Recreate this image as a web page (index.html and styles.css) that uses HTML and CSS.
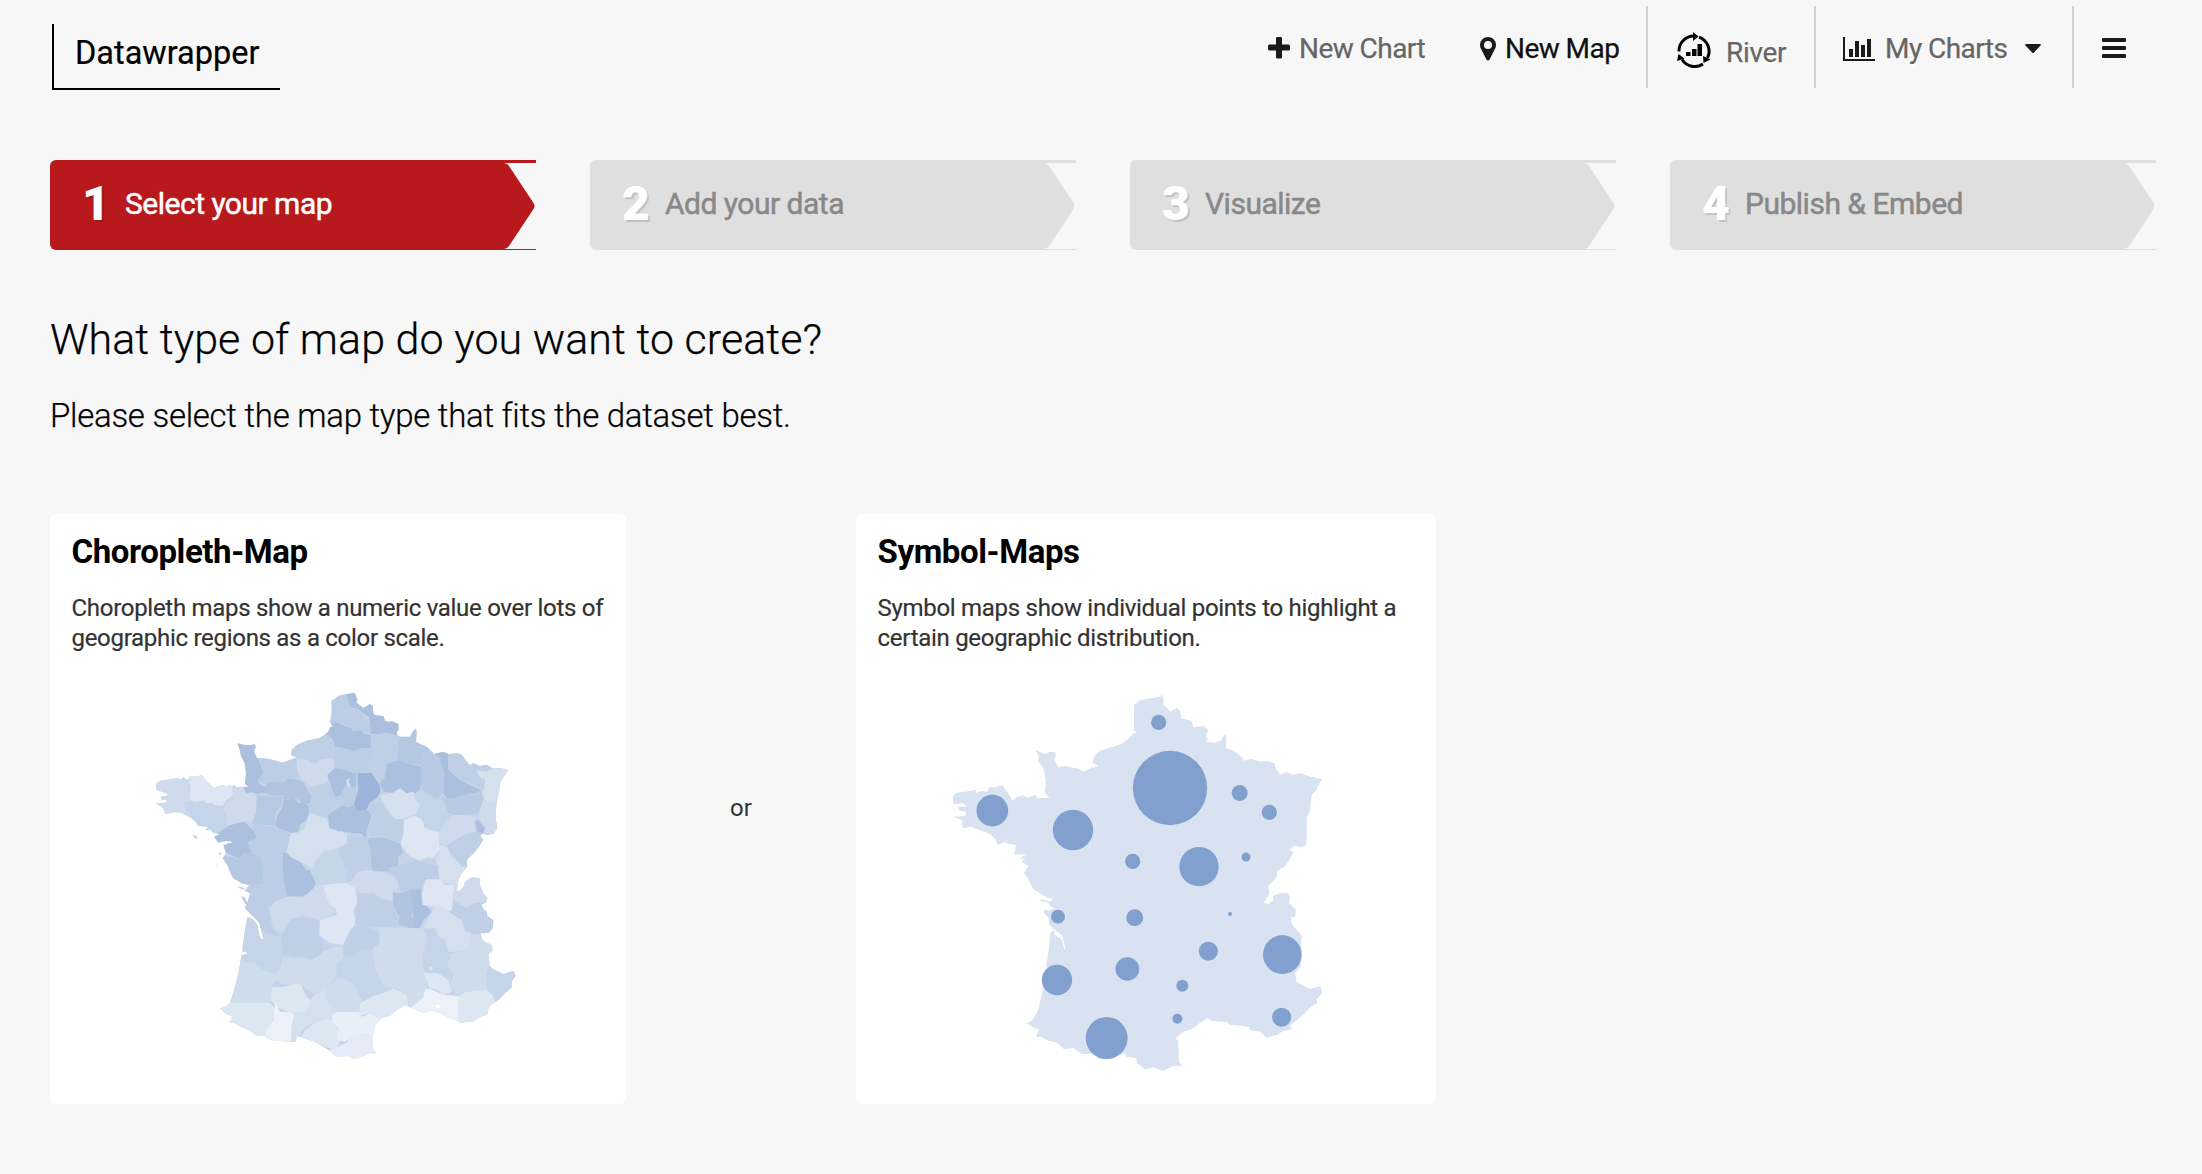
FILE: index.html
```html
<!DOCTYPE html>
<html lang="en">
<head>
<meta charset="utf-8">
<title>Datawrapper</title>
<link rel="stylesheet" href="styles.css">
</head>
<body>
<header class="header">
  <a class="logo"><span>Datawrapper</span></a>
  <nav class="nav">
    <a class="nav-item chart">
      <svg width="22" height="22" viewBox="0 0 22 22"><path fill="#1a1a1a" d="M9.300 0h3.400q1.300 0 1.300 1.300V7.500h6.500q1.500 0 1.500 1.500v3q0 1.500-1.500 1.500H14v6.700q0 1.300-1.300 1.300H9.300Q8 21.500 8 20.200V13.500H1.500Q0 13.500 0 12V9Q0 7.500 1.500 7.500H8V1.300Q8 0 9.300 0z"/></svg>
      <span class="t-chart">New Chart</span>
    </a>
    <a class="nav-item map active">
      <svg width="16" height="24" viewBox="0 0 16 24"><path fill="#1a1a1a" fill-rule="evenodd" d="M8 0a8 8 0 0 1 8 8q0 1.800-.7 3.300L9.600 22.500q-1.600 2.200-3.200 0L.7 11.300Q0 9.800 0 8a8 8 0 0 1 8-8zm0 4a4 4 0 1 0 0 8 4 4 0 0 0 0-8z"/></svg>
      <span class="t-map">New Map</span>
    </a>
    <a class="nav-item river">
      <svg width="34" height="36" viewBox="0 0 34 36"><g fill="none" stroke="#000" stroke-width="3"><path d="M2 19.500A15 15 0 0 1 17 4"/><path d="M22 5.200A15 15 0 0 1 30.500 26"/><path d="M26 32A15 15 0 0 1 5 27.500"/></g><path d="M16 0l5.500 4.500L16 9zM33.500 27.500l-7 3.500-.5-7zM0 29l1.500-7 6 4.500zM9 20h4.500v4H9zM15 17h4.500v7H15zM20.500 12H25v12h-4.500z"/></svg>
      <span class="t-river">River</span>
    </a>
    <a class="nav-item mine">
      <svg width="32" height="24" viewBox="0 0 32 24"><path fill="#1a1a1a" d="M0 0h2v22h30v2H0zM6 12h4v8H6zM12 4h4v16h-4zM18 8h4v12h-4zM24 2h4v18h-4z"/></svg>
      <span class="t-mine">My Charts</span>
      <svg class="caret" width="16" height="9" viewBox="0 0 16 9"><path fill="#1a1a1a" d="M1 0h14q1.500.3.500 1.500L9 8.400q-1 1-2 0L.5 1.500Q-.5.300 1 0z"/></svg>
    </a>
    <a class="nav-item menu">
      <svg width="24" height="20" viewBox="0 0 24 20"><g fill="#1a1a1a"><rect width="24" height="4" rx="1"/><rect y="8" width="24" height="4" rx="1"/><rect y="16" width="24" height="4" rx="1"/></g></svg>
    </a>
  </nav>
</header>

<ol class="steps">
  <li class="step current"><svg class="tip" width="36" height="86" viewBox="0 0 36 86"><path d="M3 0h33v86H3q4 0 6-3L33.500 46q2-3 0-6L9 3Q7 0 3 0z"/></svg><b>1</b><span>Select your map</span></li>
  <li class="step"><svg class="tip" width="36" height="86" viewBox="0 0 36 86"><path d="M3 0h33v86H3q4 0 6-3L33.500 46q2-3 0-6L9 3Q7 0 3 0z"/></svg><b>2</b><span>Add your data</span></li>
  <li class="step"><svg class="tip" width="36" height="86" viewBox="0 0 36 86"><path d="M3 0h33v86H3q4 0 6-3L33.500 46q2-3 0-6L9 3Q7 0 3 0z"/></svg><b>3</b><span>Visualize</span></li>
  <li class="step"><svg class="tip" width="36" height="86" viewBox="0 0 36 86"><path d="M3 0h33v86H3q4 0 6-3L33.500 46q2-3 0-6L9 3Q7 0 3 0z"/></svg><b>4</b><span>Publish &amp; Embed</span></li>
</ol>

<main>
  <h1>What type of map do you want to create?</h1>
  <p class="lead">Please select the map type that fits the dataset best.</p>
  <div class="choices">
    <section class="card choropleth">
      <h2>Choropleth-Map</h2>
      <p>Choropleth maps show a numeric value over lots of<br>geographic regions as a color scale.</p>
      <svg class="france" width="400" height="400" viewBox="0 0 1200 1200">
        <defs><clipPath id="land"><path d="M48 312L60 302 90 298 115 294 120 300 130 292 143 300 150 288 165 290 185 286 195 298 205 308 222 324 235 318 250 316 258 320 270 316 277 320 282 314 290 322 300 320 325 321 315 312 318 280 314 250 303 228 298 205 292 190 310 194 330 196 345 193 347 202 342 212 345 222 352 235 372 235 400 240 428 248 450 240 458 236 472 234 453 225 455 210 470 195 500 182 540 174 565 155 570 142 578 140 570 125 575 100 575 62 600 46 645 38 648 48 652 60 650 68 665 80 670 84 690 72 698 78 700 100 705 106 730 108 735 122 745 126 755 124 775 132 776 150 770 155 772 165 780 170 810 170 818 155 828 145 830 160 828 185 840 192 860 200 870 210 882 222 910 215 925 222 950 220 965 224 980 245 990 255 1000 250 1020 258 1040 254 1058 265 1080 264 1105 270 1095 285 1080 308 1078 330 1072 360 1068 385 1068 420 1072 445 1060 462 1040 465 1030 460 1020 468 1030 478 1020 495 1005 515 990 530 980 540 982 560 965 580 955 600 950 632 960 632 972 618 975 605 995 592 1018 595 1020 615 1030 640 1042 655 1038 668 1025 672 1028 685 1040 695 1042 708 1060 720 1058 745 1048 758 1020 760 1030 782 1055 795 1058 810 1045 825 1050 860 1065 870 1090 882 1120 873 1127 888 1115 905 1115 922 1095 940 1075 960 1060 970 1045 985 1042 1005 1020 1010 1000 1025 980 1025 965 1030 945 1020 920 1012 900 998 875 992 850 998 830 990 795 975 770 990 750 1008 725 1013 705 1035 698 1070 698 1105 708 1120 685 1120 670 1128 643 1136 620 1128 595 1132 575 1118 565 1110 540 1095 525 1085 500 1078 470 1068 468 1086 430 1084 405 1082 380 1075 375 1067 350 1068 330 1052 305 1042 280 1028 268 1028 277 1010 255 1000 240 985 260 978 270 968 285 920 295 880 305 825 322 822 318 815 308 815 308 800 315 750 323 710 340 720 352 735 360 775 370 778 366 760 358 730 345 715 330 700 315 685 325 660 330 640 315 632 328 615 305 610 280 595 270 575 262 555 248 535 258 520 250 495 260 488 250 484 235 488 222 470 240 462 220 458 212 450 195 450 205 440 175 438 168 426 150 412 125 400 105 396 75 402 70 385 48 370 75 368 82 360 65 360 62 350 85 346 80 340 50 330z"/></clipPath></defs>
        <g clip-path="url(#land)">
          <path fill="#c5d4e9" d="M0 0h1200v1200H0z"/>
          <g class="d">
            <path class="e" d="M40 280L148 280 145 330 148 362 132 370 135 385 150 395 155 412 40 412z"/>
            <path class="g" d="M148 280L200 280 222 318 280 316 280 345 258 362 245 384 235 376 222 376 215 368 200 370 190 362 165 365 148 360 150 330z"/>
            <path class="d4" d="M132 368L165 366 190 363 200 370 215 369 222 384 235 377 245 378 258 390 255 405 262 425 258 440 225 465 190 460 155 412 135 390z"/>
            <path class="e" d="M275 312L315 322 318 340 350 340 352 400 345 430 320 425 290 430 260 438 262 410 250 390 258 368 280 355z"/>
            <path class="a" d="M285 185L355 185 355 235 362 255 372 275 355 300 358 312 380 322 375 338 350 342 335 336 318 342 308 315z"/>
            <path class="c" d="M355 230L400 230 470 228 470 260 476 290 455 298 440 296 430 308 400 304 375 312 355 304 370 278 362 252z"/>
            <path class="a2" d="M375 312L400 304 430 308 440 296 460 296 475 300 490 305 500 325 515 350 508 372 490 368 460 352 450 360 430 360 428 345 400 348 375 338 380 322z"/>
            <path class="c2" d="M440 150L565 160 580 195 582 238 555 240 525 250 500 240 475 232 440 230z"/>
            <path class="e" d="M472 234L500 240 515 250 530 250 540 240 555 236 568 238 575 235 582 245 582 262 565 290 560 308 520 322 505 315 490 302 480 290 470 262z"/>
            <path class="c2" d="M508 325L560 308 575 320 600 345 606 390 570 412 545 410 510 395 508 375 515 350z"/>
            <path class="b" d="M350 345L400 350 428 348 425 362 425 375 405 405 405 435 370 435 335 428 348 400z"/>
            <path class="a" d="M430 360L450 360 460 352 475 368 490 365 508 380 505 415 480 435 475 455 455 460 415 450 405 432 412 405 428 380z"/>
            <path class="a" d="M215 470L270 435 315 425 328 440 340 450 352 475 325 485 335 520 310 522 300 538 262 520 235 500z"/>
            <path class="c" d="M335 432L400 438 452 458 448 490 435 518 400 522 360 530 330 510 325 485 350 475z"/>
            <path class="f" d="M452 460L475 458 500 440 530 470 550 510 530 540 515 568 495 550 480 545 455 535 440 515z"/>
            <path class="b2" d="M240 525L300 538 312 522 335 518 362 530 372 570 372 612 310 620 255 605z"/>
            <path class="c" d="M365 528L425 520 430 560 430 600 432 650 372 625z"/>
            <path class="d5" d="M510 575L530 540 550 512 600 508 620 540 625 610 560 625 520 605z"/>
            <path class="a" d="M428 518L440 518 450 530 480 545 500 570 515 590 527 610 515 640 480 650 440 648 428 600z"/>
          </g>
          <g class="d" transform="translate(540 0)">
            <path class="c" d="M20 30L75 33 85 70 120 95 130 115 150 130 150 158 100 155 95 140 60 132 20 125z"/>
            <path class="a" d="M75 35L115 25 170 80 245 115 245 168 152 162 150 130 148 110 128 100 120 92 108 85 90 82z"/>
            <path class="a" d="M0 150L20 128 45 126 60 132 95 145 100 155 120 150 130 160 152 165 155 205 130 205 100 212 45 200 40 180 20 162z"/>
            <path class="c" d="M42 202L100 212 130 206 155 205 155 240 145 275 130 280 100 282 75 270 45 265z"/>
            <path class="c2" d="M155 165L200 158 240 168 235 240 200 250 195 290 180 308 160 280 145 275 145 250 155 240 152 205z"/>
            <path class="b2" d="M240 168L295 130 305 178 345 215 310 225 305 255 265 250 230 238z"/>
            <path class="a" d="M200 252L235 240 265 250 305 260 305 310 295 340 260 340 240 325 220 338 190 335 180 310 195 290z"/>
            <path class="z" d="M112 280L155 278 165 295 180 315 182 335 170 355 150 368 140 390 108 395 100 372 115 330z"/>
            <path class="a" d="M22 285L45 265 75 270 108 282 110 320 95 322 82 316 75 322 68 345 45 350 35 325z"/>
            <path class="f" d="M80 300L90 294 86 306 94 322 80 316z"/>
            <path class="c" d="M62 345L75 322 108 320 108 350 102 375 65 380z"/>
            <path class="a" d="M65 378L85 380 102 375 110 395 145 390 155 405 148 430 140 450 140 475 120 460 100 460 60 452 30 440 25 408z"/>
            <path class="c2" d="M150 370L180 365 195 385 210 395 225 415 255 420 250 455 240 485 205 475 190 465 155 468 140 450 155 410 145 390z"/>
            <path class="f" d="M180 345L195 343 220 338 240 325 260 340 280 335 285 355 300 375 290 400 255 415 225 418 205 395 195 378z"/>
            <path class="d4" d="M290 335L310 325 340 350 370 360 385 405 375 435 355 455 340 450 320 445 310 420 290 405 300 375 285 350z"/>
            <path class="b3" d="M310 225L335 210 360 230 370 270 370 340 350 355 305 330 305 260z"/>
            <path class="a" d="M335 210L385 205 385 235 385 270 420 300 450 315 485 330 470 340 430 345 400 355 380 355 370 340 372 275 360 235z"/>
            <path class="c2" d="M385 210L425 210 455 240 525 245 520 275 475 270 478 288 495 300 490 325 440 305 400 285 385 260z"/>
            <path class="f" d="M470 270L500 275 515 268 580 255 550 310 540 375 500 365 485 340 495 320 495 298 478 290z"/>
            <path class="b3" d="M360 350L380 355 400 355 430 345 470 345 485 330 490 360 475 400 440 405 400 405 385 400 375 370z"/>
            <path class="e" d="M490 360L540 370 545 480 490 465 495 440 475 410z"/>
            <path class="e" d="M375 430L400 405 440 405 465 412 468 455 430 465 390 495 360 490 355 455z"/>
            <path class="c2" d="M382 495L430 465 470 455 500 460 500 500 445 555 425 580 415 545 390 520z"/>
            <path class="a" d="M465 425L475 420 495 445 490 460 470 455z"/>
            <path class="f" d="M360 495L380 498 395 530 422 555 430 600 360 610 355 560 345 535 358 520z"/>
            <path class="g" d="M252 420L285 408 300 415 310 425 312 442 325 448 355 455 360 510 340 535 325 532 295 542 265 525 242 492 250 465z"/>
            <path class="a2" d="M142 475L190 472 205 478 225 485 240 490 250 520 235 530 235 560 205 575 155 572 150 510z"/>
            <path class="c2" d="M80 470L140 470 150 510 155 572 130 570 110 600 70 605 72 550 55 510 85 485z"/>
            <path class="f" d="M-30 398L5 412 20 418 28 440 60 452 82 462 80 490 40 510 10 513 -30 525 -10 500z"/>
            <path class="f" d="M-35 405L0 415 10 520 -20 510 -50 460z"/>
            <path class="a" d="M25 405L60 380 70 400 60 455 28 445z"/>
          </g>
          <g class="d" transform="translate(180 570)">
            <path class="c" d="M120 40L195 45 240 65 262 80 225 95 205 115 215 170 240 200 190 185 150 140 115 110z"/>
            <path class="c" d="M195 0L252 0 252 45 262 80 235 75 195 60z"/>
            <path class="a" d="M248 0L335 0 347 40 315 75 265 80 252 40z"/>
            <path class="d5" d="M330 0L440 0 440 38 400 45 370 42 345 35z"/>
            <path class="e2" d="M210 115L225 95 262 80 310 80 320 100 300 140 270 150 250 190 220 175z"/>
            <path class="e" d="M315 78L345 50 370 45 385 95 410 125 380 145 355 150 305 135z"/>
            <path class="g" d="M370 45L440 38 465 50 472 95 460 120 468 160 450 180 430 225 390 220 358 195 360 150 410 135 408 118 388 105 375 65z"/>
            <path class="c" d="M565 -5L650 -30 715 -10 715 25 675 30 665 55 600 65 595 35z"/>
            <path class="e" d="M475 5L510 0 530 5 560 8 595 35 595 55 575 95 540 85 520 70 480 70 470 55 445 45z"/>
            <path class="c2" d="M470 72L520 70 540 85 580 95 598 165 570 172 530 172 500 170 465 160 472 100z"/>
            <path class="a2" d="M578 65L600 70 630 60 640 100 635 140 665 165 650 185 625 172 595 165 598 140 580 110z"/>
            <path class="a" d="M630 60L665 55 668 95 695 125 670 150 655 185 640 178 640 140z"/>
            <path class="f" d="M715 -5L800 -10 785 30 775 50 760 48 720 30z"/>
            <path class="g" d="M678 28L720 28 735 45 765 45 755 120 740 125 705 110 668 105 665 70z"/>
            <path class="e" d="M758 70L800 0 870 10 875 90 830 98 800 115 785 110 762 90z"/>
            <path class="c2" d="M765 95L800 115 825 98 870 100 900 160 850 198 810 190 790 170 785 155 750 130z"/>
            <path class="f" d="M695 125L710 108 725 112 745 125 785 150 795 185 815 190 815 215 800 240 765 245 745 245 735 210 715 200 705 175 670 175z"/>
            <path class="d4" d="M680 180L705 180 715 200 735 210 750 260 740 285 755 315 720 318 670 310 672 240z"/>
            <path class="e2" d="M755 250L800 240 815 195 850 190 895 240 880 290 865 300 860 330 870 360 800 370 770 372 750 350 760 310 740 285z"/>
            <path class="d4" d="M865 285L960 290 945 360 895 400 880 398 878 380 858 350 868 335 858 318z"/>
            <path class="h" d="M770 380L800 365 860 360 880 378 890 410 865 440 800 475 765 465z"/>
            <path class="i" d="M625 412L650 400 670 380 670 360 685 355 735 375 775 378 775 460 720 435 620 430z"/>
            <path class="h" d="M668 308L715 310 745 330 755 365 735 375 710 360 690 355 680 335z"/>
            <path class="e2" d="M530 172L670 175 680 205 668 260 672 310 685 340 665 385 630 415 615 400 590 355 550 350 525 300 515 240 540 220z"/>
            <path class="c2" d="M470 165L500 170 535 185 538 215 515 240 485 235 460 255 430 265 432 215 450 190z"/>
            <path class="e2" d="M365 245L425 225 432 262 410 285 410 320 380 350 345 375 310 350 270 345 240 340 220 320 245 262 335 268z"/>
            <path class="d4" d="M485 235L500 240 515 245 525 300 550 345 540 370 510 382 480 375 465 345 430 325 410 315 410 280 435 262 460 255z"/>
            <path class="c2" d="M305 140L355 150 355 195 370 210 365 250 335 270 310 258 290 262 245 250 245 195 270 150z"/>
            <path class="d4" d="M120 120L155 140 190 185 245 200 248 265 240 295 225 312 190 300 165 280 110 275z"/>
            <path class="e2" d="M100 270L165 280 190 300 225 312 240 320 215 350 210 398 80 405z"/>
            <path class="h" d="M215 352L250 350 300 340 320 380 340 395 320 425 280 430 235 415 210 390z"/>
            <path class="h" d="M50 398L210 398 230 420 200 495 190 515 80 480z"/>
            <path class="i" d="M225 393L240 425 265 425 285 432 275 470 288 525 190 520 200 480 220 450z"/>
            <path class="f" d="M335 385L345 375 380 350 395 395 415 425 385 450 350 455 320 470 300 490 290 525 272 525 275 470 285 430 320 425z"/>
            <path class="h" d="M350 455L390 445 415 480 420 510 410 540 300 510 315 480z"/>
            <path class="e2" d="M380 350L405 330 430 325 465 345 485 390 475 425 400 420 375 385z"/>
            <path class="h" d="M480 400L520 378 560 365 580 355 620 375 625 415 540 460 500 432 475 438z"/>
            <path class="j" d="M395 435L410 425 475 425 485 440 510 432 540 445 520 500 490 492 450 505 435 515 410 510 415 475 395 455z"/>
            <path class="k" d="M385 540L410 530 440 518 450 500 490 492 530 500 540 560 460 580 385 560z"/>
            <path class="h" d="M688 292L698 290 698 300 690 303z"/>
          </g>
        </g>
        <g class="water"><path d="M885 978l12-5 5 8-10 6zM245 492l10-8 15 0 8 6-12-2-10 6z"/></g>
        <g fill="#bccde5"><path d="M158 463l10 5 5 8-10-2zM238 517l6 1 0 7-6-1zM226 555l7 1-2 2zM292 618l18 5 5 8-16-6zM304 648l10 4 8 16-2 8-10-12z"/></g>
      </svg>
    </section>
    <span class="or">or</span>
    <section class="card symbols">
      <h2>Symbol-Maps</h2>
      <p>Symbol maps show individual points to highlight a<br>certain geographic distribution.</p>
      <svg class="france" width="400" height="400" viewBox="0 0 1200 1200">
        <path fill="#d9e2f1" d="M38 350L50 338 75 335 108 330 110 340 122 333 142 335 148 320 165 322 188 316 195 328 205 340 217 362 232 350 250 346 262 353 288 344 292 354 328 354 315 338 318 300 310 265 295 245 295 225 286 210 315 222 330 216 346 216 347 228 342 238 355 262 372 258 415 266 430 275 455 264 475 257 457 248 462 230 480 212 545 192 565 177 582 158 592 161 582 150 582 75 602 60 660 50 666 44 672 60 669 76 680 82 690 95 712 84 722 96 723 115 755 122 760 142 792 138 804 152 797 170 805 175 797 185 825 188 842 182 855 162 859 175 858 205 880 212 905 230 912 242 935 236 955 244 985 244 1003 250 1008 268 1022 284 1040 275 1058 285 1082 279 1112 290 1147 297 1135 315 1130 330 1115 345 1110 390 1100 415 1100 470 1098 495 1085 502 1062 497 1048 510 1062 516 1035 560 1012 572 1010 592 985 618 988 640 972 668 985 672 1000 660 998 648 1020 640 1042 638 1050 650 1048 670 1068 690 1065 710 1052 712 1055 732 1070 750 1085 765 1082 860 1065 880 1070 905 1085 915 1110 927 1142 918 1146 940 1130 958 1132 970 1112 980 1095 1000 1065 1025 1050 1038 1058 1048 1030 1053 1010 1065 980 1073 960 1055 928 1050 930 1042 890 1036 870 1036 862 1026 815 1023 803 1014 780 1028 755 1048 730 1055 707 1075 715 1082 716 1145 726 1158 700 1158 670 1172 640 1162 615 1168 592 1150 588 1134 560 1130 555 1120 530 1128 505 1138 480 1138 455 1122 425 1122 400 1104 372 1108 352 1088 325 1082 302 1070 288 1072 297 1048 275 1040 260 1030 278 1020 295 990 308 930 318 880 328 862 318 862 326 810 331 760 340 750 345 765 365 778 374 812 375 800 366 765 345 750 328 735 325 712 313 700 312 688 325 692 345 685 333 680 325 668 300 662 305 657 330 665 338 656 320 652 280 628 265 598 252 580 264 558 245 545 255 538 240 535 260 522 222 524 228 495 195 490 205 482 188 488 172 495 168 480 150 462 125 452 90 440 68 445 66 420 38 410 76 408 78 395 55 390 55 380 80 380 70 370 40 372z"/>
        <g fill="#82a0ce">
          <circle cx="656" cy="127" r="23"/><circle cx="690" cy="324" r="111.500"/><circle cx="899" cy="339" r="24"/><circle cx="988" cy="397" r="23"/><circle cx="157" cy="392" r="47.500"/><circle cx="399" cy="450" r="60.500"/><circle cx="578" cy="544" r="23"/><circle cx="777" cy="560" r="59"/><circle cx="918" cy="531" r="13.500"/><circle cx="354" cy="710" r="21"/><circle cx="584" cy="713" r="25.500"/><circle cx="870" cy="702" r="6"/><circle cx="805" cy="814" r="28.500"/><circle cx="1027" cy="824" r="58"/><circle cx="562" cy="867" r="35.500"/><circle cx="351" cy="900" r="45.500"/><circle cx="727" cy="917" r="18"/><circle cx="712" cy="1016" r="15"/><circle cx="1025" cy="1012" r="28.500"/><circle cx="500" cy="1074" r="63"/>
        </g>
      </svg>
    </section>
  </div>
</main>
</body>
</html>
```
FILE: styles.css
```css
* { box-sizing: border-box; }
body { margin: 0; background: #f7f7f7; color: #000; font-family: Roboto, "Liberation Sans", sans-serif; font-size: 24px; }
svg { display: block; flex: none; }
h1, h2, p, ol { margin: 0; padding: 0; font-weight: 400; }

.header { height: 160px; display: flex; justify-content: space-between; align-items: flex-start; padding: 0 0 0 52px; }
.logo { margin-top: 24px; width: 228px; height: 66px; border: solid #000; border-width: 0 0 2px 2px; padding: 9px 0 0 21px; font-size: 32.5px; line-height: 40px; white-space: nowrap; -webkit-text-stroke: .2px; }
.nav { display: flex; margin-top: 6px; height: 82px; font-size: 28px; line-height: 40px; letter-spacing: -.55px; color: #666; text-shadow: 0 2px 0 #fff; -webkit-text-stroke: .25px; }
.nav-item { display: flex; align-items: flex-start; white-space: nowrap; }
.nav-item span { padding-top: 23px; }
.chart { width: 212px; gap: 9px; }
.chart svg { margin-top: 31px; }
.map { width: 166px; gap: 9px; color: #111; }
.map svg { margin-top: 31px; }
.river { width: 168px; gap: 15px; border-left: 2px solid #d0d0d0; padding-left: 29px; letter-spacing: -.3px; }
.river svg { margin-top: 26px; }
.nav .river span { padding-top: 27px; }
.mine { width: 258px; gap: 10px; border-left: 2px solid #d0d0d0; padding-left: 27px; }
.mine svg { margin-top: 31px; }
.mine .caret { margin: 38px 0 0 8px; }
.menu { width: 130px; border-left: 2px solid #d0d0d0; padding-left: 28px; }
.menu svg { margin-top: 32px; }

.steps { list-style: none; display: flex; gap: 54px; padding: 0 0 0 50px; }
.step { position: relative; width: 486px; height: 90px; background: #dfdfdf; border-radius: 6px 0 0 6px; display: flex; padding-left: 32px; color: #888; }
.step b { width: 43px; font-size: 48px; line-height: 88px; font-weight: 900; color: #fff; text-shadow: 2px 2px 0 rgba(0, 0, 0, .12); }
.step span { font-size: 30px; line-height: 87px; letter-spacing: -.5px; white-space: nowrap; -webkit-text-stroke: .5px; }
.current { background: #b7191d; color: #fff; }
.tip { position: absolute; right: 0; top: 3px; fill: #f7f7f7; }

main { padding: 64px 0 0 50px; }
h1 { font-size: 43px; line-height: 50px; font-weight: 300; letter-spacing: .05px; -webkit-text-stroke: .25px; }
.lead { margin-top: 32px; font-size: 33px; line-height: 40px; font-weight: 300; letter-spacing: -.27px; -webkit-text-stroke: .25px; }
.choices { display: flex; align-items: center; margin-top: 78px; }
.card { height: 590px; background: #fff; border-radius: 6px; padding: 18px 0 0 21.5px; color: #333; }
.choropleth { width: 576px; }
.symbols { width: 580px; }
.card h2 { font-size: 33px; line-height: 40px; font-weight: 700; letter-spacing: -.4px; color: #000; white-space: nowrap; }
.card p { margin-top: 21px; line-height: 30px; letter-spacing: -.29px; white-space: nowrap; -webkit-text-stroke: .2px; }
.choropleth .france { margin: 27px 0 0 68.5px; }
.symbols .france { margin: 27px 0 0 62.5px; }
.or { width: 230px; padding: 0 0 3px 104px; color: #333; }

.z { fill: #9db5db; } .a { fill: #abc0de; } .a2 { fill: #b0c4e0; } .b { fill: #b6c9e2; } .b2 { fill: #b4c8e1; } .b3 { fill: #b8cae4; }
.c { fill: #bccde5; } .c2 { fill: #bfcfe6; } .d4 { fill: #c4d4e9; } .d5 { fill: #c6d6e9; } .e { fill: #cfdbed; } .e2 { fill: #cfdcec; }
.f { fill: #d4e0ee; } .g { fill: #dde6f2; } .h { fill: #dce7f1; } .i { fill: #ebf0f9; } .j { fill: #e8eff8; } .k { fill: #e4ebf6; }
.d path { stroke: #d5e1f2; stroke-opacity: .15; stroke-width: 1.500; stroke-linejoin: round; }
.water { fill: #fff; }
```
